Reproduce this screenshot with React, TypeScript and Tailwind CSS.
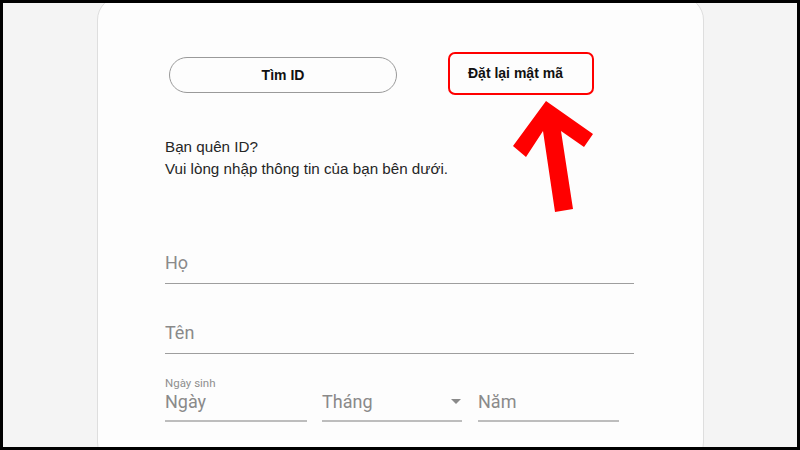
import React from "react";

export default function App() {
  const roboto = { fontFamily: "Roboto, 'Noto Sans', sans-serif" };
  return (
    <div className="relative w-[800px] h-[450px] bg-black p-[3px]">
      <div className="w-full h-full bg-[#f4f4f4] overflow-hidden">
        <div
          className="ml-[94px] -mt-[7px] w-[607px] h-[470px] bg-[#fdfdfd] border border-[#dedede] rounded-[24px] pl-[67px] pr-[69px] pt-[55px]"
          style={{ fontFamily: "'Liberation Sans', Arial, sans-serif" }}
        >
          <div className="flex h-[43px]">
            <div className="mt-[5px] ml-[4px] w-[228px] h-[36px] rounded-full border border-[#9a9a9a] flex items-center justify-center text-[14px] font-bold text-[#111]">
              Tìm ID
            </div>
            <div className="ml-[51px] w-[146px] h-[43px] rounded-[7px] border-2 border-[#ff0000] flex items-center pl-[18px] text-[14px] font-bold text-[#111]">
              Đặt lại mật mã
            </div>
          </div>

          <div className="mt-[41px] text-[15.2px] leading-[22px] text-[#262626]">
            <div>Bạn quên ID?</div>
            <div>Vui lòng nhập thông tin của bạn bên dưới.</div>
          </div>

          <div style={roboto}>
            <div className="mt-[71px] text-[18px] leading-[24px] pb-[8px] border-b border-[#9e9e9e] text-[#8a8a8a]">
              Họ
            </div>
            <div className="mt-[37px] text-[18px] leading-[24px] pb-[8px] border-b border-[#9e9e9e] text-[#8a8a8a]">
              Tên
            </div>
            <div className="mt-[22px] text-[11.5px] leading-[14px] text-[#8f8f8f]">Ngày sinh</div>
            <div className="flex text-[18px] leading-[24px] text-[#8a8a8a]">
              <div className="w-[142px] pb-[6px] border-b-2 border-[#bdbdbd]">Ngày</div>
              <div className="relative ml-[15px] w-[140px] pb-[6px] border-b-2 border-[#bdbdbd]">
                Tháng
                <svg className="absolute right-[1px] top-[9px]" width="10" height="5" viewBox="0 0 10 5">
                  <path d="M0 0 L10 0 L5 5 Z" fill="#8a8a8a" />
                </svg>
              </div>
              <div className="ml-[16px] w-[141px] pb-[6px] border-b-2 border-[#bdbdbd]">Năm</div>
            </div>
          </div>
        </div>
      </div>

      <svg
        className="absolute left-0 top-0 pointer-events-none"
        width="800"
        height="450"
        viewBox="0 0 800 450"
      >
        <polygon
          points="546,101 593,134 584,147 561,131 573,209 555,212 543,131 526,157 513,146"
          fill="#ff0000"
          strokeLinejoin="round"
        />
      </svg>
    </div>
  );
}
